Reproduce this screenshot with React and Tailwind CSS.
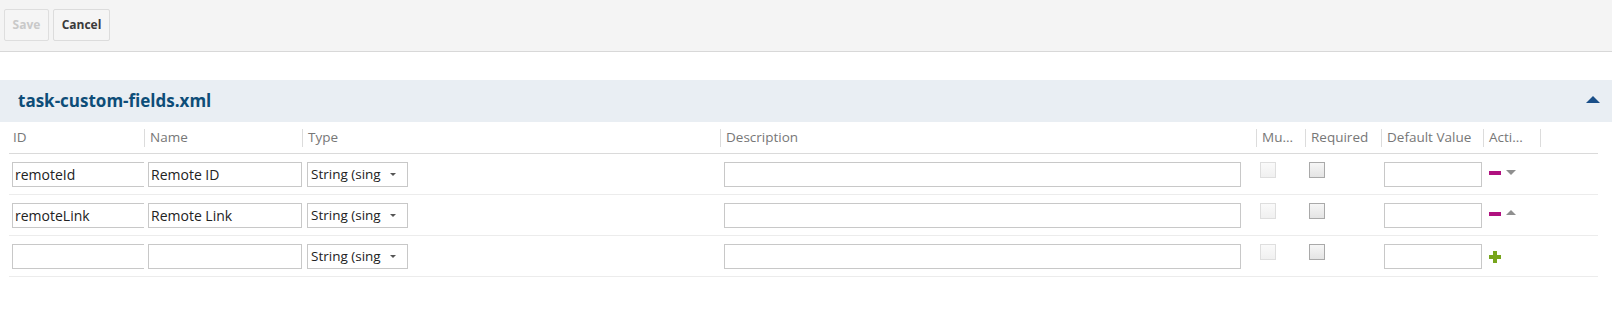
import React from 'react';

const FONT = { fontFamily: '"Open Sans", "Noto Sans", sans-serif' };

const ROWS = [
  { id: 'remoteId', name: 'Remote ID', move: 'down' },
  { id: 'remoteLink', name: 'Remote Link', move: 'up' },
  { id: '', name: '', move: null },
];

function Sep() {
  return <span className="h-[18px] w-px bg-[#dcdcdc] shrink-0" />;
}

function HeaderCell({ w, label, first }) {
  return (
    <div className={`${w} shrink-0 flex items-center overflow-hidden`}>
      {!first && <Sep />}
      <span className={`${first ? 'ml-[4px]' : 'ml-[5px]'} text-[13.5px] text-[#777] whitespace-nowrap`}>{label}</span>
    </div>
  );
}

function TextBox({ value, className }) {
  return (
    <div className={`h-[25px] border border-[#c8c8c8] bg-white flex items-center pl-[2px] text-[14px] text-[#222] whitespace-nowrap overflow-hidden ${className}`}>
      {value}
    </div>
  );
}

function Checkbox({ disabled }) {
  return (
    <div
      className={`w-[16px] h-[16px] border ${
        disabled ? 'border-[#dedede] bg-gradient-to-b from-[#fafafa] to-[#f0f0f0]' : 'border-[#a9a9a9] bg-gradient-to-b from-[#f6f6f6] to-[#e4e4e4]'
      }`}
    />
  );
}

function Row({ row }) {
  return (
    <div className="flex h-[41px] border-b border-[#ececec] pt-[8px]">
      <div className="w-[135px] shrink-0 overflow-hidden pl-[3px]">
        <TextBox value={row.id} className="w-[160px]" />
      </div>
      <div className="w-[158px] shrink-0 pl-[4px]">
        <TextBox value={row.name} className="w-[154px]" />
      </div>
      <div className="w-[418px] shrink-0 pl-[5px]">
        <div className="w-[101px] h-[25px] border border-[#c8c8c8] bg-white flex items-center">
          <span className="w-[70px] ml-[3px] overflow-hidden whitespace-nowrap text-[13.5px] text-[#222]">String (sing</span>
          <span className="ml-[9px] w-0 h-0 border-l-[3.5px] border-r-[3.5px] border-t-[3px] border-l-transparent border-r-transparent border-t-[#555]" />
        </div>
      </div>
      <div className="w-[536px] shrink-0 pl-[4px]">
        <TextBox value="" className="w-[517px]" />
      </div>
      <div className="w-[49px] shrink-0 pl-[4px]">
        <Checkbox disabled />
      </div>
      <div className="w-[76px] shrink-0 pl-[4px]">
        <Checkbox />
      </div>
      <div className="w-[102px] shrink-0 pl-[3px]">
        <TextBox value="" className="w-[98px] h-[20px]" />
      </div>
      <div className="w-[57px] shrink-0 pl-[6px] flex items-start">
        {row.move ? (
          <div className="flex items-center h-[21px] gap-[5px]">
            <span className="w-[12px] h-[4px] bg-[#b0117f]" />
            {row.move === 'down' ? (
              <span className="w-0 h-0 border-l-[5px] border-r-[5px] border-t-[5px] border-l-transparent border-r-transparent border-t-[#8f8f8f]" />
            ) : (
              <span className="w-0 h-0 border-l-[5px] border-r-[5px] border-b-[5px] border-l-transparent border-r-transparent border-b-[#8f8f8f] mb-[2px]" />
            )}
          </div>
        ) : (
          <svg width="12" height="12" viewBox="0 0 12 12" className="mt-[7px]">
            <path d="M4 0h4v4h4v4H8v4H4V8H0V4h4z" fill="#78a51c" />
          </svg>
        )}
      </div>
      <div className="flex-1" />
    </div>
  );
}

export default function App() {
  return (
    <div className="w-[1612px] h-[326px] bg-white" style={FONT}>
      {/* toolbar */}
      <div className="h-[52px] bg-[#f4f4f4] border-b border-[#d8d8d8] flex items-start pt-[9px] pl-[4px] gap-[4px]">
        <button className="h-[32px] w-[45px] border border-[#dedede] rounded-[2px] bg-[#f5f5f5] text-[12px] font-bold text-[#c9c9c9]">
          Save
        </button>
        <button className="h-[32px] w-[57px] border border-[#dcdcdc] rounded-[2px] bg-[#f5f5f5] text-[12px] font-bold text-[#3a3a3a]">
          Cancel
        </button>
      </div>

      <div className="h-[28px]" />

      {/* section header */}
      <div className="h-[42px] bg-[#e9eef3] flex items-center pl-[18px] pr-[12px]">
        <h2 className="text-[17px] font-bold text-[#0d4d78] flex-1">task-custom-fields.xml</h2>
        <span className="w-0 h-0 border-l-[7px] border-r-[7px] border-b-[7px] border-l-transparent border-r-transparent border-b-[#1a4f88] mt-[-4px]" />
      </div>

      {/* grid */}
      <div className="ml-[9px] mr-[14px]">
        <div className="flex h-[32px] border-b border-[#dadada]">
          <HeaderCell w="w-[135px]" label="ID" first />
          <HeaderCell w="w-[158px]" label="Name" />
          <HeaderCell w="w-[418px]" label="Type" />
          <HeaderCell w="w-[536px]" label="Description" />
          <HeaderCell w="w-[49px]" label="Mu..." />
          <HeaderCell w="w-[76px]" label="Required" />
          <HeaderCell w="w-[102px]" label="Default Value" />
          <HeaderCell w="w-[57px]" label="Acti..." />
          <div className="flex-1 flex items-center">
            <Sep />
          </div>
        </div>
        {ROWS.map((r, i) => (
          <Row key={i} row={r} />
        ))}
      </div>
    </div>
  );
}
